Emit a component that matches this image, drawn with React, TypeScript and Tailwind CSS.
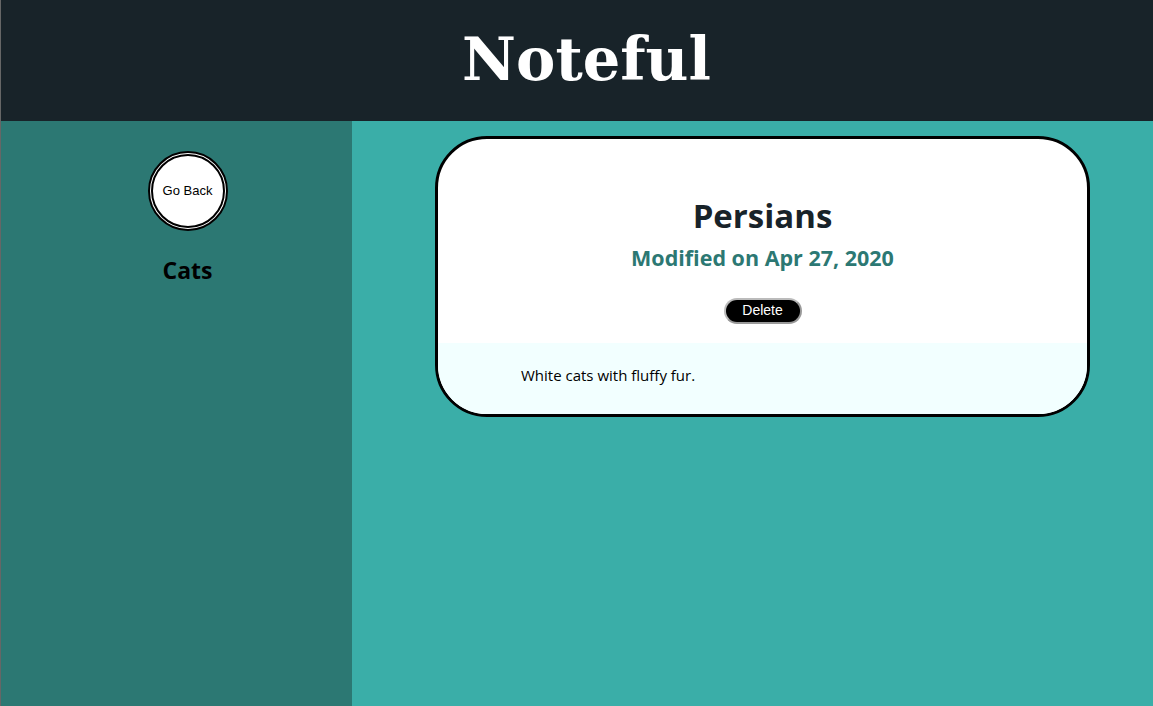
import React from 'react'

const App = () => {
    return (
        <div className="min-h-[706px] h-[706px] flex flex-col border-l border-[#666] bg-[#3aaea8] overflow-hidden">
            <header className="h-[121px] bg-[#182329] flex items-center justify-center shrink-0 pl-[19px]">
                <h1 className="text-white font-bold text-[59px] leading-none pb-[3px]" style={{ fontFamily: '"DejaVu Serif", Georgia, serif' }}>
                    Noteful
                </h1>
            </header>
            <div className="flex flex-1">
                <aside className="w-[351px] bg-[#2c7873] flex flex-col items-center pt-[30px] pl-[22px]">
                    <button className="w-[80px] h-[80px] rounded-full bg-white border-[5px] border-double border-black text-[13px] text-black" style={{ fontFamily: '"Liberation Sans", Arial, sans-serif' }}>
                        Go Back
                    </button>
                    <h2 className="mt-[22px] text-[23px] font-bold text-black" style={{ fontFamily: '"Open Sans", "Noto Sans", sans-serif' }}>
                        Cats
                    </h2>
                </aside>
                <main className="flex-1 pt-[15px] pl-[83px]">
                    <section className="w-[655px] h-[281px] border-[3px] border-black rounded-[52px] overflow-hidden bg-white flex flex-col" style={{ fontFamily: '"Open Sans", "Noto Sans", sans-serif' }}>
                        <div className="h-[204px] flex flex-col items-center pt-[60px]">
                            <h2 className="text-[33px] font-bold leading-none text-[#182329]">Persians</h2>
                            <p className="mt-[15px] text-[21.5px] font-bold leading-none text-[#2c7873]">Modified on Apr 27, 2020</p>
                            <button className="mt-[29px] w-[78px] h-[26px] rounded-full bg-black text-white text-[14px] border-2 border-[#999] border-t-[#bbb] border-l-[#bbb]" style={{ fontFamily: '"Liberation Sans", Arial, sans-serif' }}>
                                Delete
                            </button>
                        </div>
                        <div className="flex-1 bg-[#f2ffff] pl-[83px] pt-[21px]">
                            <p className="text-[15px] text-black">White cats with fluffy fur.</p>
                        </div>
                    </section>
                </main>
            </div>
        </div>
    )
}

export default App
